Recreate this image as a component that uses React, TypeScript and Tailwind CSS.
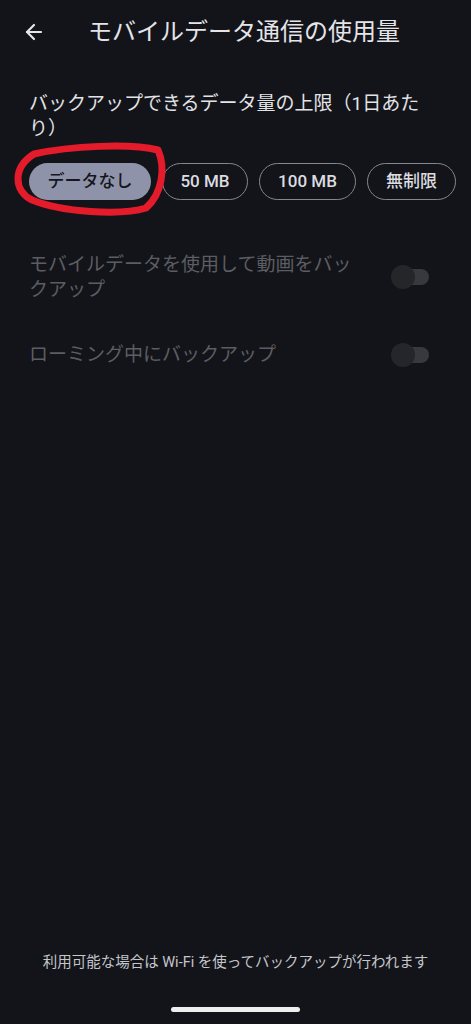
import { ArrowLeft } from 'lucide-react'

const jp = { fontFamily: 'Roboto, "Noto Sans CJK JP", sans-serif' }

interface Chip {
  label: string
  width: string
  selected?: boolean
}

const chips: Chip[] = [
  { label: 'データなし', width: 'w-[122px]', selected: true },
  { label: '50 MB', width: 'w-[86px]' },
  { label: '100 MB', width: 'w-[97px]' },
  { label: '無制限', width: 'w-[89px]' },
]

function Toggle() {
  return (
    <div className="relative h-[24px] w-[38px] shrink-0">
      <div className="absolute left-[4px] top-[4px] h-[16px] w-[34px] rounded-full bg-[#38393e]" />
      <div className="absolute left-0 top-0 h-[24px] w-[24px] rounded-full bg-[#25262a]" />
    </div>
  )
}

function ToggleRow({ label }: { label: string }) {
  return (
    <div className="flex items-center justify-between">
      <p className="w-[332px] text-[19px] leading-[25px] text-[#5c5d62]">{label}</p>
      <div className="mr-[42px]">
        <Toggle />
      </div>
    </div>
  )
}

export default function App() {
  return (
    <div className="flex h-[1024px] w-[471px] flex-col overflow-hidden bg-[#131419]" style={jp}>
      {/* Header */}
      <div className="flex h-[64px] items-center">
        <ArrowLeft className="ml-[22px] h-[24px] w-[24px] text-[#e6e6ea]" strokeWidth={2.2} />
        <h1 className="ml-[42px] text-[24px] text-[#e4e4e9]">モバイルデータ通信の使用量</h1>
      </div>

      {/* Daily limit */}
      <div className="relative px-[29px]">
        <p className="mt-[27px] text-[19px] leading-[25px] text-[#e2e2e7]">
          バックアップできるデータ量の上限（1日あたり）
        </p>
        <div className="mt-[22px] flex gap-[11px]">
          {chips.map((chip) => (
            <div
              key={chip.label}
              className={
                chip.selected
                  ? `${chip.width} flex h-[37px] shrink-0 items-center justify-center rounded-full bg-[#8f93a9] text-[17px] font-medium text-[#15161b]`
                  : `${chip.width} flex h-[37px] shrink-0 items-center justify-center rounded-full border border-[#85878e] text-[17px] font-medium text-[#dcdce1]`
              }
            >
              {chip.label}
            </div>
          ))}
        </div>

        {/* hand-drawn marker */}
        <svg
          className="pointer-events-none absolute left-0 top-0"
          width="200"
          height="160"
          viewBox="0 64 200 160"
        >
          <path
            d="M34 154 C70 146 130 143 158 150 C166 168 162 194 146 208 C120 216 62 212 32 200 C14 191 12 168 34 154 Z"
            fill="none"
            stroke="#e41b2b"
            strokeWidth="7"
            strokeLinejoin="round"
          />
        </svg>
      </div>

      {/* Toggles */}
      <div className="mt-[52px] flex flex-col gap-[40px] pl-[29px]">
        <ToggleRow label="モバイルデータを使用して動画をバックアップ" />
        <ToggleRow label="ローミング中にバックアップ" />
      </div>

      {/* Footer */}
      <div className="mt-auto flex flex-col items-center">
        <p className="text-[14.5px] text-[#c5c6cb]">利用可能な場合は Wi-Fi を使ってバックアップが行われます</p>
        <div className="mb-[12px] mt-[33px] h-[5px] w-[129px] rounded-full bg-[#eeeeee]" />
      </div>
    </div>
  )
}
